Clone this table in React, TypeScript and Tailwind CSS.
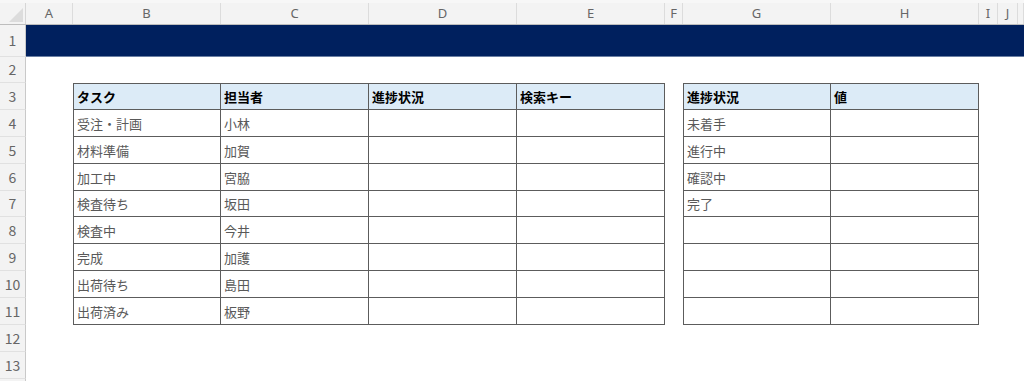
import React from "react"

const cols = ["A", "B", "C", "D", "E", "F", "G", "H", "I", "J", ""]
const grid = "grid grid-cols-[26px_47px_148px_148px_148px_148px_18px_148px_148px_19px_20px_1fr]"

const tasks = [
  ["受注・計画", "小林"],
  ["材料準備", "加賀"],
  ["加工中", "宮脇"],
  ["検査待ち", "坂田"],
  ["検査中", "今井"],
  ["完成", "加護"],
  ["出荷待ち", "島田"],
  ["出荷済み", "板野"],
]
const status = ["未着手", "進行中", "確認中", "完了", "", "", "", ""]
const rowHeights = ["h-[27px]", "h-[27px]", "h-[27px]", "h-[26px]", "h-[27px]", "h-[27px]", "h-[27px]", "h-[27px]"]

function RowHead({ n }: { n: number }) {
  return (
    <div className="flex items-center justify-center bg-[#f3f3f3] border-r border-b border-r-[#c9c9c9] border-b-[#e1e1e1] text-[14px] text-[#666]">
      {n}
    </div>
  )
}

function Cell({ children, head, left, top }: { children?: React.ReactNode; head?: boolean; left?: boolean; top?: boolean }) {
  return (
    <div
      className={`flex items-center px-[3px] pt-[1px] border-r border-b border-[#5c5c5c] text-[13px] whitespace-nowrap overflow-hidden ${left ? "border-l" : ""} ${top ? "border-t" : ""} ${
        head ? "bg-[#dcebf7] font-bold text-black" : "bg-white text-[#595959]"
      }`}
    >
      {children}
    </div>
  )
}

export default function App() {
  return (
    <div className="w-[1024px] h-[381px] overflow-hidden bg-white font-['Noto_Sans_CJK_JP',sans-serif]">
      {/* column header */}
      <div className="h-[3px] bg-[#f7f7f7]" />
      <div className={`${grid} h-[22px] bg-[#f3f3f3] border-b border-[#bdbdbd]`}>
        <div className="relative border-r border-[#d6d6d6]">
          <div className="absolute right-[2px] bottom-[2px] w-0 h-0 border-l-[14px] border-l-transparent border-b-[14px] border-b-[#dcdcdc]" />
        </div>
        {cols.map((c, i) => (
          <div key={i} className="flex items-center justify-center border-r border-[#dcdcdc] text-[13px] text-[#666] font-['Noto_Sans',sans-serif]">
            {c}
          </div>
        ))}
      </div>

      {/* row 1 */}
      <div className={`${grid} h-[32px]`}>
        <RowHead n={1} />
        <div className="col-span-11 bg-[#00205e] border-b border-[#6a7fa3]" />
      </div>

      {/* row 2 */}
      <div className={`${grid} h-[26px]`}>
        <RowHead n={2} />
        <div className="col-span-11" />
      </div>

      {/* row 3 header */}
      <div className={`${grid} h-[27px]`}>
        <RowHead n={3} />
        <div />
        <Cell head left top>タスク</Cell>
        <Cell head top>担当者</Cell>
        <Cell head top>進捗状況</Cell>
        <Cell head top>検索キー</Cell>
        <div />
        <Cell head left top>進捗状況</Cell>
        <Cell head top>値</Cell>
        <div className="col-span-3" />
      </div>

      {tasks.map((t, i) => (
        <div key={i} className={`${grid} ${rowHeights[i]}`}>
          <RowHead n={i + 4} />
          <div />
          <Cell left>{t[0]}</Cell>
          <Cell>{t[1]}</Cell>
          <Cell />
          <Cell />
          <div />
          <Cell left>{status[i]}</Cell>
          <Cell />
          <div className="col-span-3" />
        </div>
      ))}

      {[12, 13].map((n) => (
        <div key={n} className={`${grid} h-[27px]`}>
          <RowHead n={n} />
          <div className="col-span-11" />
        </div>
      ))}
      <div className="w-[26px] h-[10px] bg-[#f3f3f3] border-r border-[#c9c9c9]" />
    </div>
  )
}
